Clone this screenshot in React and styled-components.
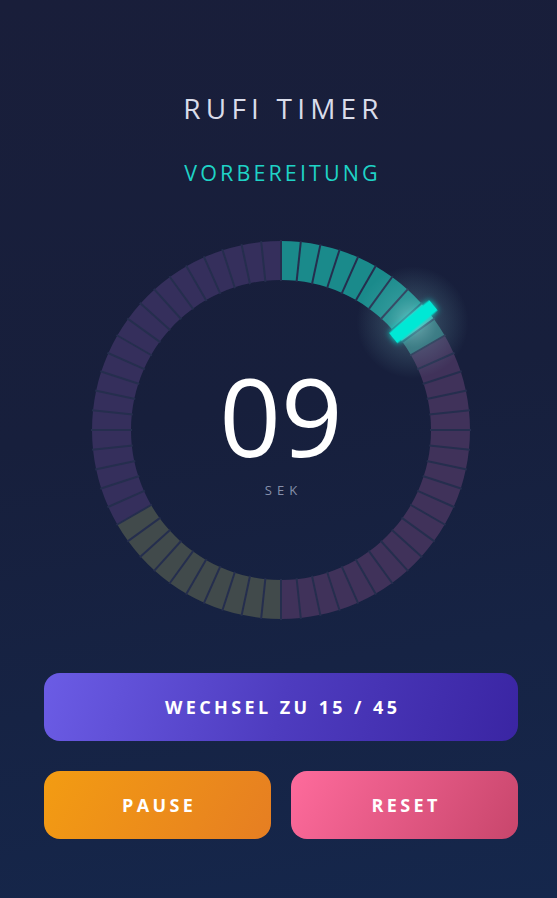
import styled, { createGlobalStyle } from 'styled-components';

const GlobalStyle = createGlobalStyle`
  html, body {
    margin: 0;
    padding: 0;
  }
  body {
    font-family: "Open Sans", "Noto Sans", sans-serif;
    background: #171f3c;
  }
`;

const Page = styled.main`
  box-sizing: border-box;
  width: 100%;
  height: 898px;
  padding: 90px 39px 0 44px;
  display: flex;
  flex-direction: column;
  align-items: center;
  background: linear-gradient(170deg, #191e3a 0%, #171f3c 45%, #15274c 100%);
  overflow: hidden;
`;

const Title = styled.h1`
  margin: 0;
  font-size: 28px;
  font-weight: 400;
  line-height: 36px;
  letter-spacing: 5.2px;
  text-indent: 5.2px;
  color: #d9dcea;
`;

const Phase = styled.h2`
  margin: 33px 0 0;
  font-size: 21.5px;
  font-weight: 400;
  line-height: 28px;
  letter-spacing: 3.1px;
  text-indent: 3.1px;
  color: #1fd3c6;
`;

const Dial = styled.div`
  position: relative;
  width: 400px;
  height: 400px;
  margin-top: 43px;
`;

const Readout = styled.div`
  position: absolute;
  inset: 0;
  display: flex;
  flex-direction: column;
  align-items: center;
  justify-content: center;
`;

const Seconds = styled.div`
  font-size: 108px;
  font-weight: 400;
  line-height: 1;
  color: #ffffff;
`;

const Unit = styled.div`
  margin-top: 12px;
  font-size: 13px;
  line-height: 16px;
  letter-spacing: 5px;
  text-indent: 5px;
  color: #8690aa;
`;

const Controls = styled.div`
  width: 100%;
  margin-top: 43px;
  display: grid;
  grid-template-columns: 1fr 1fr;
  gap: 30px 20px;
`;

const Button = styled.button`
  grid-column: ${(p) => (p.$wide ? '1 / -1' : 'auto')};
  height: 68px;
  border: 0;
  border-radius: 16px;
  font-family: "Open Sans", "Noto Sans", sans-serif;
  font-size: 18px;
  font-weight: 700;
  letter-spacing: 3.4px;
  text-indent: 3.4px;
  color: #ffffff;
  background: ${(p) => p.$bg};
  cursor: pointer;
`;

const SEGMENTS = 60;
const R_IN = 150;
const R_OUT = 189;
const C = 200;

function segColor(i) {
  if (i < 8) return '#1a8a8b';
  if (i === 8) return '#479ea2';
  if (i === 9) return '#2c6a74';
  if (i < 30) return '#40325a';
  if (i < 40) return '#414a4b';
  return '#352f5c';
}

function polar(r, deg) {
  const a = (deg * Math.PI) / 180;
  return [C + r * Math.sin(a), C - r * Math.cos(a)];
}

function sectorPath(a0, a1) {
  const [x0, y0] = polar(R_OUT, a0);
  const [x1, y1] = polar(R_OUT, a1);
  const [x2, y2] = polar(R_IN, a1);
  const [x3, y3] = polar(R_IN, a0);
  return `M${x0} ${y0} A${R_OUT} ${R_OUT} 0 0 1 ${x1} ${y1} L${x2} ${y2} A${R_IN} ${R_IN} 0 0 0 ${x3} ${y3} Z`;
}

function Ring({ hand }) {
  const segs = Array.from({ length: SEGMENTS }, (_, i) => i);
  const [gx, gy] = polar(170, hand);
  return (
    <svg width="400" height="400" viewBox="0 0 400 400">
      <defs>
        <radialGradient id="glow">
          <stop offset="0%" stopColor="#bfeff0" stopOpacity="0.5" />
          <stop offset="45%" stopColor="#8fd6da" stopOpacity="0.18" />
          <stop offset="100%" stopColor="#8fd6da" stopOpacity="0" />
        </radialGradient>
        <filter id="bloom" x="-1" y="-1" width="3" height="3">
          <feGaussianBlur stdDeviation="3" result="b" />
          <feMerge>
            <feMergeNode in="b" />
            <feMergeNode in="SourceGraphic" />
          </feMerge>
        </filter>
      </defs>
      {segs.map((i) => (
        <path key={i} d={sectorPath(i * 6, (i + 1) * 6)} fill={segColor(i)} />
      ))}
      {segs.map((i) => {
        const [x0, y0] = polar(R_IN - 1, i * 6);
        const [x1, y1] = polar(R_OUT + 1, i * 6);
        return <line key={i} x1={x0} y1={y0} x2={x1} y2={y1} stroke="#252e4e" strokeWidth="2" />;
      })}
      <circle cx={gx} cy={gy} r="56" fill="url(#glow)" />
      <rect
        x={C - 6.5}
        y={C - 197}
        width="13"
        height="52"
        fill="#02e8d5"
        filter="url(#bloom)"
        transform={`rotate(${hand} ${C} ${C})`}
      />
    </svg>
  );
}

export default function App() {
  return (
    <>
      <GlobalStyle />
      <Page>
        <Title>RUFI TIMER</Title>
        <Phase>VORBEREITUNG</Phase>
        <Dial>
          <Ring hand={50.7} />
          <Readout>
            <Seconds>09</Seconds>
            <Unit>SEK</Unit>
          </Readout>
        </Dial>
        <Controls>
          <Button $wide $bg="linear-gradient(105deg, #6b5ce5 0%, #4e3cbf 50%, #3a25a3 100%)">
            WECHSEL ZU 15 / 45
          </Button>
          <Button $bg="linear-gradient(120deg, #f39c12 0%, #e67e22 100%)">PAUSE</Button>
          <Button $bg="linear-gradient(120deg, #fe6b9c 0%, #c8466c 100%)">RESET</Button>
        </Controls>
      </Page>
    </>
  );
}
